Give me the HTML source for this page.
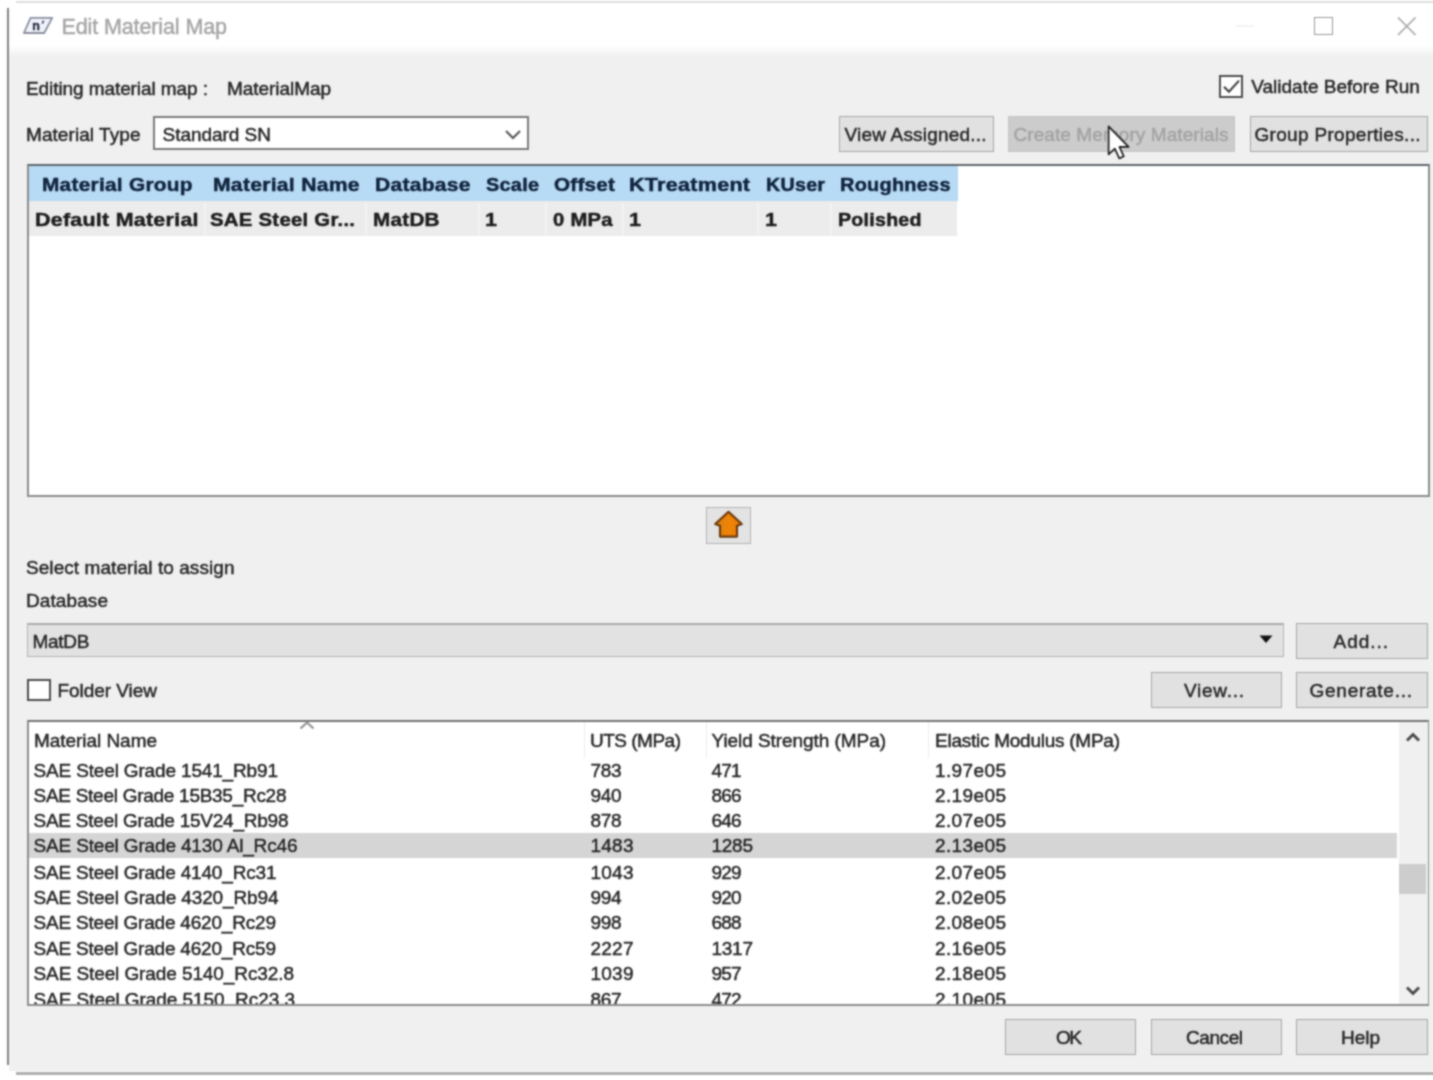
<!DOCTYPE html>
<html><head><meta charset="utf-8">
<style>
*{box-sizing:border-box;margin:0;padding:0}
html,body{width:1433px;height:1080px;overflow:hidden;background:#fff}
body{position:relative;font-family:"Liberation Sans",sans-serif;color:#252525;font-size:19px}
.a{position:absolute}
.t{position:absolute;white-space:pre;line-height:1}
.btn{position:absolute;background:#e1e1e1;border:1.7px solid #a8a8a8}
#w{position:absolute;left:-20px;top:-20px;width:1473px;height:1120px;background:#fff;filter:url(#soft);overflow:hidden}
#c{position:absolute;left:20px;top:20px;width:1453px;height:1100px}
.t{-webkit-text-stroke:0.45px currentColor}
</style></head><body><svg width="0" height="0" style="position:absolute"><filter id="soft" x="0" y="0" width="100%" height="100%" color-interpolation-filters="sRGB"><feConvolveMatrix order="5" kernelMatrix="0.0005 0.0050 0.0109 0.0050 0.0005 0.0050 0.0522 0.1141 0.0522 0.0050 0.0109 0.1141 0.2491 0.1141 0.0109 0.0050 0.0522 0.1141 0.0522 0.0050 0.0005 0.0050 0.0109 0.0050 0.0005" divisor="1" edgeMode="duplicate" preserveAlpha="true"/></filter></svg><div id="w"><div id="c">
<!-- window frame -->
<div class="a" style="left:16px;top:1.2px;width:1437px;height:1.8px;background:#dedede"></div>
<div class="a" style="left:7.3px;top:8.3px;width:2.1px;height:1057px;background:#848484"></div>
<div class="a" style="left:9.4px;top:56px;width:1444px;height:1015px;background:#f0f0f0"></div>
<div class="a" style="left:9.4px;top:45px;width:1444px;height:12px;background:linear-gradient(#fff,#f0f0f0)"></div>
<div class="a" style="left:16.2px;top:1072.4px;width:1437px;height:2.8px;background:#aeaeae"></div>
<!-- title icon + controls -->
<svg class="a" style="left:22px;top:16px" width="32" height="20" viewBox="0 0 32 20"><path d="M8.6 1.8 L30.2 1.8 L22.2 17 L1.9 17 Z" fill="#f1f3fc" stroke="#8b8e9e" stroke-width="1.8" stroke-linejoin="round"/><text x="10.2" y="14.3" font-size="12.5" font-weight="bold" fill="#2d3044" stroke="#2d3044" stroke-width="0.5" font-family="Liberation Sans">n</text><path d="M21.6 4.6 L20.3 7.6" stroke="#3d4170" stroke-width="1.6"/></svg>
<div class="a" style="left:1236px;top:25px;width:18px;height:2px;background:#f3f3f3"></div>
<div class="a" style="left:1314px;top:17px;width:19px;height:18px;border:1.5px solid #9a9a9a"></div>
<svg class="a" style="left:1396px;top:15px" width="22" height="22" viewBox="0 0 22 22"><path d="M2 2.5 L19.5 20 M19.5 2.5 L2 20" stroke="#a4a4a4" stroke-width="1.6" fill="none"/></svg>
<!-- validate checkbox -->
<div class="a" style="left:1219px;top:74.6px;width:24px;height:23px;border:2px solid #4e4e4e;background:#fff"></div>
<svg class="a" style="left:1219px;top:75px" width="24" height="23" viewBox="0 0 24 23"><path d="M5 11.8 L10 16.8 L20 5.6" stroke="#404040" stroke-width="2.1" fill="none"/></svg>
<!-- material type combo -->
<div class="a" style="left:152.6px;top:115.8px;width:376.6px;height:34.4px;border:2px solid #7c7c7c;background:#fff"></div>
<svg class="a" style="left:504px;top:129px" width="18" height="12" viewBox="0 0 18 12"><path d="M2 2 L9 9 L16 2" stroke="#555" stroke-width="2" fill="none"/></svg>
<!-- top buttons -->
<div class="btn" style="left:839.4px;top:116px;width:154.6px;height:35.5px"></div>
<div class="btn" style="left:1008px;top:116px;width:227px;height:35.5px;background:#cccccc;border-color:#c4c4c4"></div>
<div class="btn" style="left:1249.6px;top:116px;width:178.4px;height:35.5px"></div>
<!-- top table -->
<div class="a" style="left:27px;top:163.5px;width:1403px;height:333px;border:2px solid #8c8c8c;border-top-color:#5e666b;background:#fff"></div>
<div class="a" style="left:28.5px;top:165.5px;width:929.5px;height:35.5px;background:#b7daf5"></div>
<div class="a" style="left:28.5px;top:201px;width:928.5px;height:35px;background:#ececec"></div>
<div class="a" style="left:204px;top:203px;width:2px;height:32px;background:#f3f3f3"></div>
<div class="a" style="left:365px;top:203px;width:2px;height:32px;background:#f3f3f3"></div>
<div class="a" style="left:478px;top:203px;width:2px;height:32px;background:#f3f3f3"></div>
<div class="a" style="left:545px;top:203px;width:2px;height:32px;background:#f3f3f3"></div>
<div class="a" style="left:622px;top:203px;width:2px;height:32px;background:#f3f3f3"></div>
<div class="a" style="left:757px;top:203px;width:2px;height:32px;background:#f3f3f3"></div>
<div class="a" style="left:830px;top:203px;width:2px;height:32px;background:#f3f3f3"></div>
<!-- arrow button -->
<div class="btn" style="left:705.5px;top:506.5px;width:45.5px;height:37px;border-color:#b4b4b4;background:#e3e3e3"></div>
<svg class="a" style="left:713px;top:509px" width="32" height="32" viewBox="0 0 32 32"><defs><linearGradient id="og" x1="0" x2="1"><stop offset="0" stop-color="#d9820f"/><stop offset="0.55" stop-color="#f08308"/><stop offset="1" stop-color="#e67a05"/></linearGradient></defs><path d="M15.5 2.8 L28.8 15.1 L24 16.8 L24 27.6 L7 27.6 L7 16.8 L2.2 15.1 Z" fill="url(#og)" stroke="#6a3a0c" stroke-width="2.1" stroke-linejoin="round"/></svg>
<!-- db combo -->
<div class="a" style="left:27px;top:622.5px;width:1257px;height:34px;border:1.5px solid #b4b4b4;border-top:2px solid #ababab;background:#e2e2e2"></div>
<svg class="a" style="left:1259px;top:635px" width="14" height="9" viewBox="0 0 14 9"><path d="M0.5 0.5 L13.5 0.5 L7 8 Z" fill="#111"/></svg>
<div class="btn" style="left:1296px;top:623px;width:132px;height:35.5px"></div>
<!-- folder view -->
<div class="a" style="left:27px;top:678.6px;width:23.6px;height:22.8px;border:2px solid #4e4e4e;background:#fff"></div>
<div class="btn" style="left:1151px;top:672px;width:131px;height:35.5px"></div>
<div class="btn" style="left:1296px;top:672px;width:132px;height:35.5px"></div>
<!-- bottom table -->
<div class="a" style="left:27px;top:719.6px;width:1402px;height:286.6px;border:2px solid #8e8e8e;border-top-color:#747474;background:#fff"></div>
<div class="a" style="left:29px;top:833px;width:1368px;height:25px;background:#d5d5d5"></div>
<div class="a" style="left:584px;top:722px;width:1px;height:36px;background:#eeeeee"></div>
<div class="a" style="left:706px;top:722px;width:1px;height:36px;background:#eeeeee"></div>
<div class="a" style="left:928px;top:722px;width:1px;height:36px;background:#eeeeee"></div>
<div class="a" style="left:1398.5px;top:722px;width:29px;height:282.5px;background:#f0f0f0"></div>
<div class="a" style="left:1399px;top:863.5px;width:27px;height:30px;background:#cdcdcd"></div>
<svg class="a" style="left:299px;top:721px" width="16" height="9" viewBox="0 0 16 9"><path d="M1.5 7.5 L8 1.5 L14.5 7.5" stroke="#8e8e8e" stroke-width="2" fill="none"/></svg>
<svg class="a" style="left:1405px;top:732px" width="16" height="11" viewBox="0 0 16 11"><path d="M2 8.5 L8 2.5 L14 8.5" stroke="#4a4a4a" stroke-width="2.9" fill="none"/></svg>
<svg class="a" style="left:1405px;top:985px" width="16" height="11" viewBox="0 0 16 11"><path d="M2 2.5 L8 8.5 L14 2.5" stroke="#4a4a4a" stroke-width="2.9" fill="none"/></svg>
<!-- bottom buttons -->
<div class="btn" style="left:1005px;top:1019px;width:131px;height:35.5px"></div>
<div class="btn" style="left:1151px;top:1019px;width:131px;height:35.5px"></div>
<div class="btn" style="left:1296px;top:1019px;width:132px;height:35.5px"></div>

<!-- texts -->
<div class="t" style="left:61.5px;top:17.1px;font-size:21.5px;letter-spacing:-0.112px;color:#a6a6a6">Edit Material Map</div>
<div class="t" style="left:26.0px;top:79.0px;font-size:19px;letter-spacing:-0.083px;color:#252525">Editing material map :</div>
<div class="t" style="left:227.0px;top:79.0px;font-size:19px;letter-spacing:-0.055px;color:#252525">MaterialMap</div>
<div class="t" style="left:1251.3px;top:77.0px;font-size:19px;letter-spacing:-0.009px;color:#252525">Validate Before Run</div>
<div class="t" style="left:26.0px;top:124.5px;font-size:19px;letter-spacing:0.066px;color:#252525">Material Type</div>
<div class="t" style="left:162.5px;top:124.5px;font-size:19px;letter-spacing:-0.030px;color:#252525">Standard SN</div>
<div class="t" style="left:844.5px;top:124.5px;font-size:19px;letter-spacing:0.195px;color:#252525">View Assigned...</div>
<div class="t" style="left:1013.5px;top:124.5px;font-size:19px;letter-spacing:0.078px;color:#a3a3a3">Create Memory Materials</div>
<div class="t" style="left:1254.5px;top:124.5px;font-size:19px;letter-spacing:0.304px;color:#252525">Group Properties...</div>
<div class="t" style="left:41.5px;top:174.7px;font-size:19px;letter-spacing:0.250px;color:#10233c;font-weight:bold;transform:scaleX(1.0959);transform-origin:0 50%;-webkit-text-stroke:0.5px #10233c">Material Group</div>
<div class="t" style="left:212.5px;top:174.7px;font-size:19px;letter-spacing:0.250px;color:#10233c;font-weight:bold;transform:scaleX(1.1112);transform-origin:0 50%;-webkit-text-stroke:0.5px #10233c">Material Name</div>
<div class="t" style="left:374.5px;top:174.7px;font-size:19px;letter-spacing:0.250px;color:#10233c;font-weight:bold;transform:scaleX(1.1072);transform-origin:0 50%;-webkit-text-stroke:0.5px #10233c">Database</div>
<div class="t" style="left:486.0px;top:174.7px;font-size:19px;letter-spacing:0.250px;color:#10233c;font-weight:bold;transform:scaleX(1.0463);transform-origin:0 50%;-webkit-text-stroke:0.5px #10233c">Scale</div>
<div class="t" style="left:554.0px;top:174.7px;font-size:19px;letter-spacing:0.250px;color:#10233c;font-weight:bold;transform:scaleX(1.0863);transform-origin:0 50%;-webkit-text-stroke:0.5px #10233c">Offset</div>
<div class="t" style="left:629.0px;top:174.7px;font-size:19px;letter-spacing:0.250px;color:#10233c;font-weight:bold;transform:scaleX(1.1332);transform-origin:0 50%;-webkit-text-stroke:0.5px #10233c">KTreatment</div>
<div class="t" style="left:766.0px;top:174.7px;font-size:19px;letter-spacing:0.250px;color:#10233c;font-weight:bold;transform:scaleX(1.0354);transform-origin:0 50%;-webkit-text-stroke:0.5px #10233c">KUser</div>
<div class="t" style="left:840.0px;top:174.7px;font-size:19px;letter-spacing:0.250px;color:#10233c;font-weight:bold;transform:scaleX(1.0479);transform-origin:0 50%;-webkit-text-stroke:0.5px #10233c">Roughness</div>
<div class="t" style="left:34.5px;top:210.0px;font-size:19px;letter-spacing:0.250px;color:#1c1c1c;font-weight:bold;transform:scaleX(1.1258);transform-origin:0 50%;-webkit-text-stroke:0.5px #1c1c1c">Default Material</div>
<div class="t" style="left:210.0px;top:210.0px;font-size:19px;letter-spacing:0.250px;color:#1c1c1c;font-weight:bold;transform:scaleX(1.0701);transform-origin:0 50%;-webkit-text-stroke:0.5px #1c1c1c">SAE Steel Gr...</div>
<div class="t" style="left:372.5px;top:210.0px;font-size:19px;letter-spacing:0.250px;color:#1c1c1c;font-weight:bold;transform:scaleX(1.0871);transform-origin:0 50%;-webkit-text-stroke:0.5px #1c1c1c">MatDB</div>
<div class="t" style="left:485.0px;top:210.0px;font-size:19px;letter-spacing:0.250px;color:#1c1c1c;font-weight:bold;transform:scaleX(1.1200);transform-origin:0 50%;-webkit-text-stroke:0.5px #1c1c1c">1</div>
<div class="t" style="left:552.5px;top:210.0px;font-size:19px;letter-spacing:0.250px;color:#1c1c1c;font-weight:bold;transform:scaleX(1.0640);transform-origin:0 50%;-webkit-text-stroke:0.5px #1c1c1c">0 MPa</div>
<div class="t" style="left:628.5px;top:210.0px;font-size:19px;letter-spacing:0.250px;color:#1c1c1c;font-weight:bold;transform:scaleX(1.1200);transform-origin:0 50%;-webkit-text-stroke:0.5px #1c1c1c">1</div>
<div class="t" style="left:765.0px;top:210.0px;font-size:19px;letter-spacing:0.250px;color:#1c1c1c;font-weight:bold;transform:scaleX(1.1200);transform-origin:0 50%;-webkit-text-stroke:0.5px #1c1c1c">1</div>
<div class="t" style="left:838.0px;top:210.0px;font-size:19px;letter-spacing:0.250px;color:#1c1c1c;font-weight:bold;transform:scaleX(1.0317);transform-origin:0 50%;-webkit-text-stroke:0.5px #1c1c1c">Polished</div>
<div class="t" style="left:26.0px;top:558.0px;font-size:19px;letter-spacing:0.062px;color:#252525">Select material to assign</div>
<div class="t" style="left:26.0px;top:590.5px;font-size:19px;letter-spacing:0.094px;color:#252525">Database</div>
<div class="t" style="left:32.5px;top:631.5px;font-size:19px;letter-spacing:-0.270px;color:#252525">MatDB</div>
<div class="t" style="left:1333.5px;top:631.5px;font-size:19px;letter-spacing:0.969px;color:#252525">Add...</div>
<div class="t" style="left:57.5px;top:681.0px;font-size:19px;letter-spacing:-0.048px;color:#252525">Folder View</div>
<div class="t" style="left:1184.0px;top:681.0px;font-size:19px;letter-spacing:0.727px;color:#252525">View...</div>
<div class="t" style="left:1309.5px;top:681.0px;font-size:19px;letter-spacing:0.744px;color:#252525">Generate...</div>
<div class="t" style="left:34.0px;top:730.5px;font-size:19px;letter-spacing:-0.046px;color:#252525">Material Name</div>
<div class="t" style="left:590.0px;top:730.5px;font-size:19px;letter-spacing:-0.500px;color:#252525">UTS (MPa)</div>
<div class="t" style="left:711.5px;top:730.5px;font-size:19px;letter-spacing:-0.061px;color:#252525">Yield Strength (MPa)</div>
<div class="t" style="left:935.0px;top:730.5px;font-size:19px;letter-spacing:-0.253px;color:#252525">Elastic Modulus (MPa)</div>
<div class="t" style="left:33.5px;top:760.6px;font-size:19px;letter-spacing:-0.156px;color:#252525">SAE Steel Grade 1541_Rb91</div>
<div class="t" style="left:590.5px;top:760.6px;font-size:19px;letter-spacing:-0.352px;color:#252525">783</div>
<div class="t" style="left:711.5px;top:760.6px;font-size:19px;letter-spacing:-0.852px;color:#252525">471</div>
<div class="t" style="left:935.0px;top:760.6px;font-size:19px;letter-spacing:0.385px;color:#252525">1.97e05</div>
<div class="t" style="left:33.5px;top:785.5px;font-size:19px;letter-spacing:-0.274px;color:#252525">SAE Steel Grade 15B35_Rc28</div>
<div class="t" style="left:590.5px;top:785.5px;font-size:19px;letter-spacing:-0.352px;color:#252525">940</div>
<div class="t" style="left:711.5px;top:785.5px;font-size:19px;letter-spacing:-0.852px;color:#252525">866</div>
<div class="t" style="left:935.0px;top:785.5px;font-size:19px;letter-spacing:0.385px;color:#252525">2.19e05</div>
<div class="t" style="left:33.5px;top:810.9px;font-size:19px;letter-spacing:-0.236px;color:#252525">SAE Steel Grade 15V24_Rb98</div>
<div class="t" style="left:590.5px;top:810.9px;font-size:19px;letter-spacing:-0.352px;color:#252525">878</div>
<div class="t" style="left:711.5px;top:810.9px;font-size:19px;letter-spacing:-0.852px;color:#252525">646</div>
<div class="t" style="left:935.0px;top:810.9px;font-size:19px;letter-spacing:0.385px;color:#252525">2.07e05</div>
<div class="t" style="left:33.5px;top:836.0px;font-size:19px;letter-spacing:-0.159px;color:#252525">SAE Steel Grade 4130 Al_Rc46</div>
<div class="t" style="left:590.5px;top:836.0px;font-size:19px;letter-spacing:0.240px;color:#252525">1483</div>
<div class="t" style="left:711.5px;top:836.0px;font-size:19px;letter-spacing:-0.260px;color:#252525">1285</div>
<div class="t" style="left:935.0px;top:836.0px;font-size:19px;letter-spacing:0.385px;color:#252525">2.13e05</div>
<div class="t" style="left:33.5px;top:862.8px;font-size:19px;letter-spacing:-0.174px;color:#252525">SAE Steel Grade 4140_Rc31</div>
<div class="t" style="left:590.5px;top:862.8px;font-size:19px;letter-spacing:0.240px;color:#252525">1043</div>
<div class="t" style="left:711.5px;top:862.8px;font-size:19px;letter-spacing:-0.852px;color:#252525">929</div>
<div class="t" style="left:935.0px;top:862.8px;font-size:19px;letter-spacing:0.385px;color:#252525">2.07e05</div>
<div class="t" style="left:33.5px;top:887.9px;font-size:19px;letter-spacing:-0.135px;color:#252525">SAE Steel Grade 4320_Rb94</div>
<div class="t" style="left:590.5px;top:887.9px;font-size:19px;letter-spacing:-0.352px;color:#252525">994</div>
<div class="t" style="left:711.5px;top:887.9px;font-size:19px;letter-spacing:-0.852px;color:#252525">920</div>
<div class="t" style="left:935.0px;top:887.9px;font-size:19px;letter-spacing:0.385px;color:#252525">2.02e05</div>
<div class="t" style="left:33.5px;top:913.2px;font-size:19px;letter-spacing:-0.195px;color:#252525">SAE Steel Grade 4620_Rc29</div>
<div class="t" style="left:590.5px;top:913.2px;font-size:19px;letter-spacing:-0.352px;color:#252525">998</div>
<div class="t" style="left:711.5px;top:913.2px;font-size:19px;letter-spacing:-0.852px;color:#252525">688</div>
<div class="t" style="left:935.0px;top:913.2px;font-size:19px;letter-spacing:0.385px;color:#252525">2.08e05</div>
<div class="t" style="left:33.5px;top:938.8px;font-size:19px;letter-spacing:-0.195px;color:#252525">SAE Steel Grade 4620_Rc59</div>
<div class="t" style="left:590.5px;top:938.8px;font-size:19px;letter-spacing:0.240px;color:#252525">2227</div>
<div class="t" style="left:711.5px;top:938.8px;font-size:19px;letter-spacing:-0.260px;color:#252525">1317</div>
<div class="t" style="left:935.0px;top:938.8px;font-size:19px;letter-spacing:0.385px;color:#252525">2.16e05</div>
<div class="t" style="left:33.5px;top:964.2px;font-size:19px;letter-spacing:-0.097px;color:#252525">SAE Steel Grade 5140_Rc32.8</div>
<div class="t" style="left:590.5px;top:964.2px;font-size:19px;letter-spacing:0.240px;color:#252525">1039</div>
<div class="t" style="left:711.5px;top:964.2px;font-size:19px;letter-spacing:-0.852px;color:#252525">957</div>
<div class="t" style="left:935.0px;top:964.2px;font-size:19px;letter-spacing:0.385px;color:#252525">2.18e05</div>
<div class="t" style="left:33.5px;top:989.8px;font-size:19px;letter-spacing:-0.058px;color:#252525">SAE Steel Grade 5150_Rc23.3</div>
<div class="t" style="left:590.5px;top:989.8px;font-size:19px;letter-spacing:-0.352px;color:#252525">867</div>
<div class="t" style="left:711.5px;top:989.8px;font-size:19px;letter-spacing:-0.852px;color:#252525">472</div>
<div class="t" style="left:935.0px;top:989.8px;font-size:19px;letter-spacing:0.385px;color:#252525">2.10e05</div>
<div class="t" style="left:1056.0px;top:1027.5px;font-size:19px;letter-spacing:-1.453px;color:#252525">OK</div>
<div class="t" style="left:1186.0px;top:1027.5px;font-size:19px;letter-spacing:-0.431px;color:#252525">Cancel</div>
<div class="t" style="left:1341.0px;top:1027.5px;font-size:19px;letter-spacing:-0.026px;color:#252525">Help</div>
<!-- mouse cursor -->
<svg class="a" style="left:1107px;top:124px" width="26" height="38" viewBox="0 0 26 38"><path d="M1.6 2.3 L1.6 30.3 L7.8 24.6 L12.3 34.4 L16.8 32.3 L12.4 22.9 L21.6 22.9 Z" fill="#fff" stroke="#1e1e1e" stroke-width="1.7" stroke-linejoin="round"/></svg>
<!-- clip last row under bottom table border -->
<div class="a" style="left:10px;top:1004.2px;width:1443px;height:13px;background:#f0f0f0"></div>
<div class="a" style="left:27px;top:1004.2px;width:1402px;height:2px;background:#8e8e8e"></div>

</div></div></body></html>
